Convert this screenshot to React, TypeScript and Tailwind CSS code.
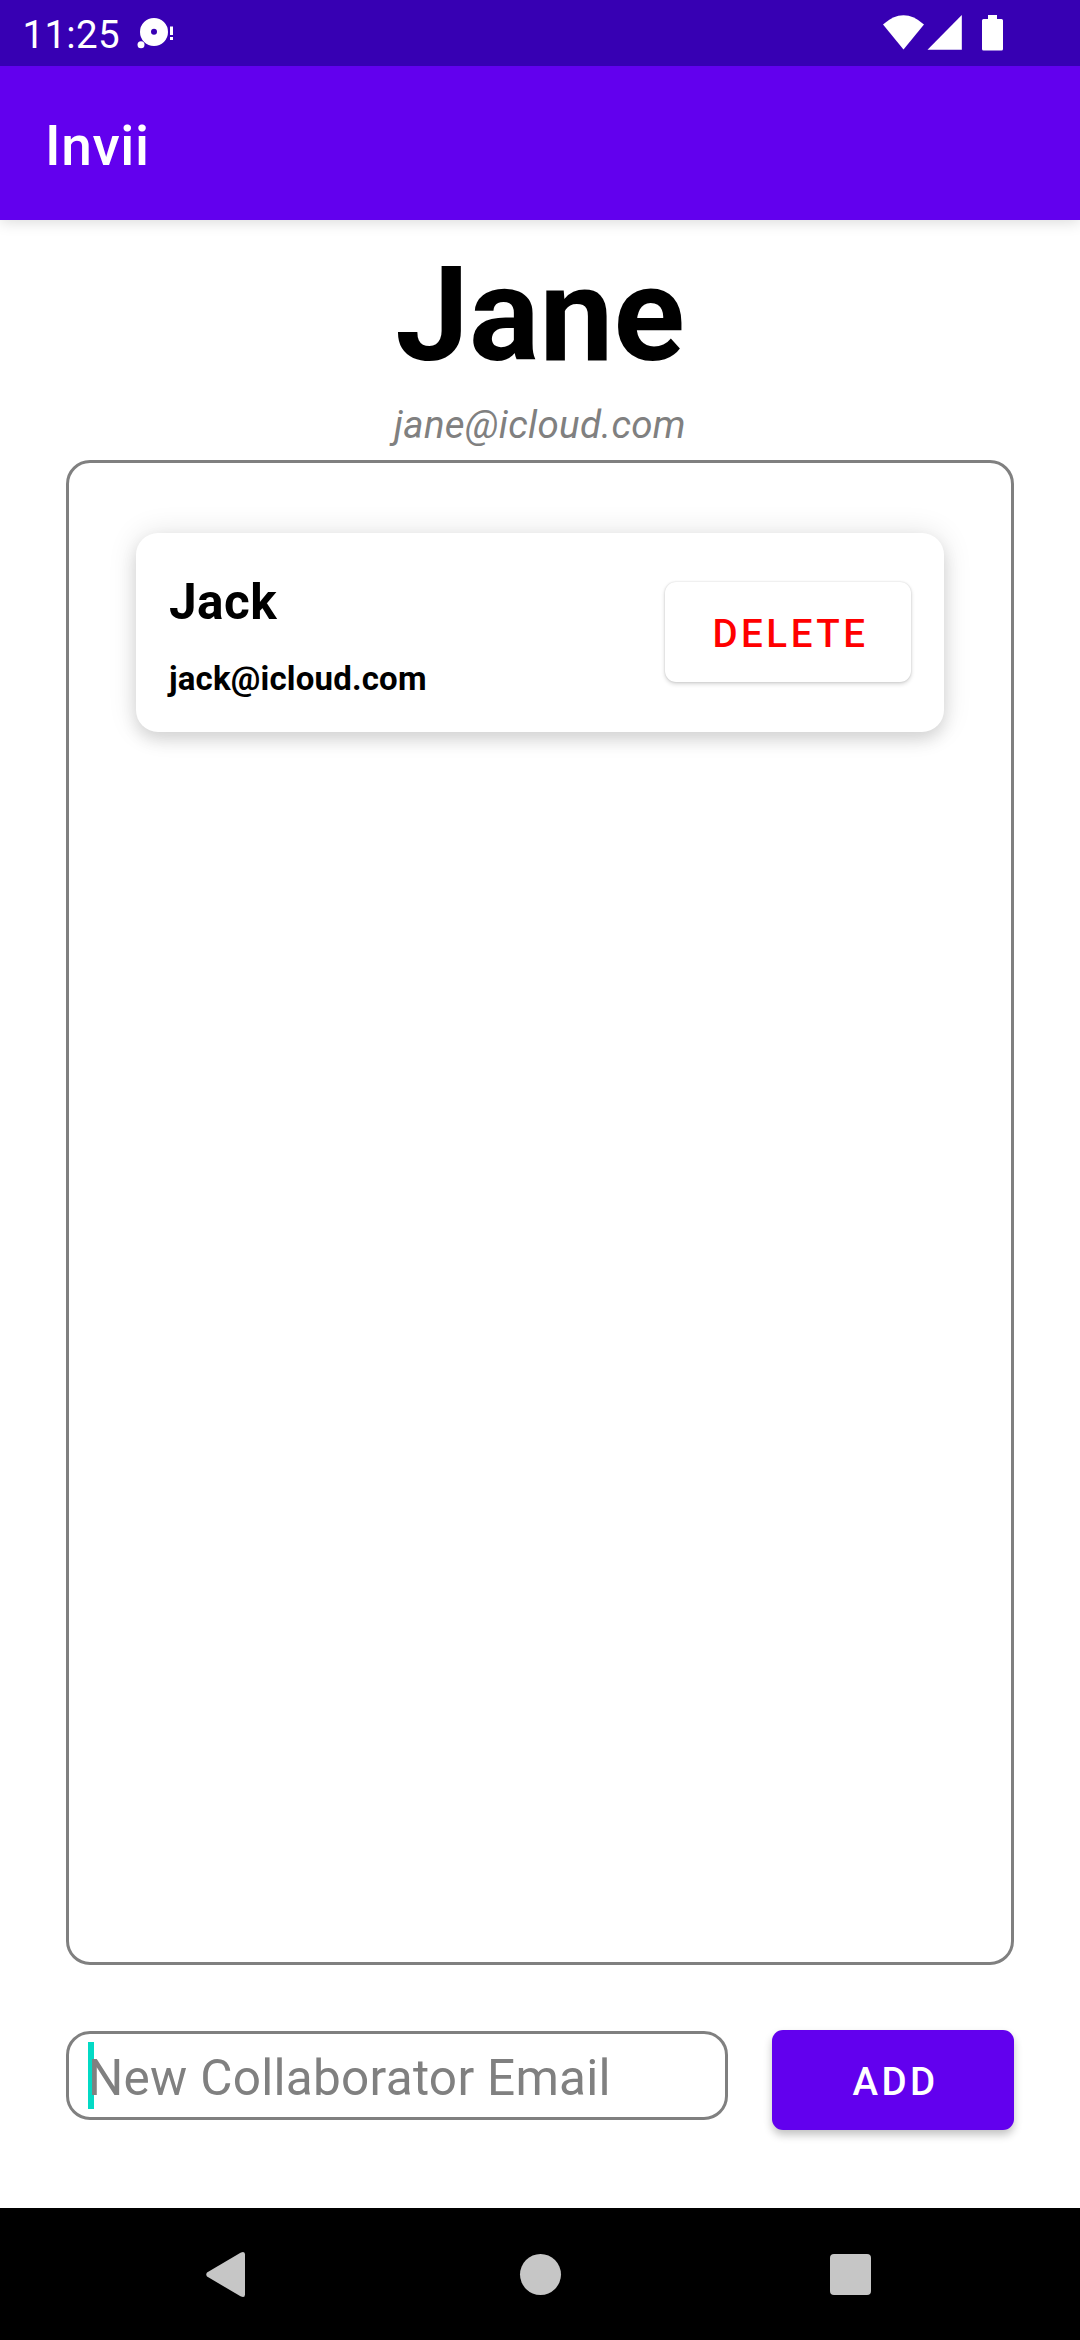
function StatusBar() {
  return (
    <div className="relative z-10 flex h-[66px] items-center bg-[#3700b3] text-white">
      <span className="ml-[22.5px] w-[97.5px] whitespace-nowrap text-[38.5px] leading-[66px] pt-[4px] tracking-[0.3px]">11:25</span>
      <svg className="ml-[16px]" width="40" height="66" viewBox="136 0 40 66" fill="currentColor">
        <path fillRule="evenodd" d="M154 18a14 14 0 1 0 0 28a14 14 0 1 0 0-28zM154 28.8a3 3 0 1 1 0 6a3 3 0 1 1 0-6z" />
        <circle cx="141" cy="44.7" r="3.5" />
        <path d="M170 26.500h3v8.500h-3zM170 37h3v3h-3z" />
      </svg>
      <svg className="ml-auto mr-[70px]" width="130" height="66" viewBox="880 0 130 66" fill="currentColor">
        <path d="M883 24.500Q903.500 6 924 24.500L903.500 49.500z" />
        <path d="M961.800 15v34.800H927.500z" />
        <path d="M988 15h9v4h4.500a1.500 1.500 0 0 1 1.500 1.500v28.500a1.500 1.500 0 0 1-1.500 1.500h-18a1.500 1.500 0 0 1-1.500-1.500v-28.500a1.500 1.500 0 0 1 1.500-1.500h4.500z" />
      </svg>
    </div>
  );
}

function CollaboratorCard({ name, email }: { name: string; email: string }) {
  return (
    <div className="flex h-[199px] items-start justify-between rounded-[22px] bg-white pl-[33px] pr-[33px] shadow-[0_0_30px_rgba(0,0,0,0.11),0_8px_16px_rgba(0,0,0,0.12)]">
      <div className="flex flex-col font-bold text-black">
        <span className="mt-[39px] text-[49.5px] leading-[60px] tracking-[0.4px]">{name}</span>
        <span className="mt-[29px] text-[33px] leading-[36px] tracking-[0.18px]">{email}</span>
      </div>
      <button className="mt-[49px] h-[100px] w-[246px] rounded-[11px] bg-white pl-[5px] pt-[4px] text-[38.5px] font-medium leading-none tracking-[3.5px] text-[#ff0000] shadow-[0_0_2px_rgba(0,0,0,0.16),0_2px_4px_rgba(0,0,0,0.17)]">
        DELETE
      </button>
    </div>
  );
}

function NavigationBar() {
  return (
    <div className="flex h-[132px] items-center bg-black text-[#c6c6c6]">
      <svg className="ml-[200px]" width="50" height="132" viewBox="200 2208 50 132" fill="currentColor">
        <path d="M207 2272.500L240.500 2252.700Q245 2250.500 245 2254.500V2294.500Q245 2298.500 240.500 2296.300L207 2276.500Q205.500 2274.500 207 2272.500z" />
      </svg>
      <div className="ml-[270px] size-[41px] rounded-full bg-[#c6c6c6]" />
      <div className="ml-[269px] size-[41px] rounded-[4px] bg-[#c6c6c6]" />
    </div>
  );
}

export default function App() {
  return (
    <div className="flex h-[2340px] w-[1080px] flex-col overflow-hidden bg-white font-[Roboto,sans-serif]">
      <StatusBar />
      <header className="relative h-[154px] bg-[#6200ee] pl-[45px] text-[55px] font-medium leading-[160px] tracking-[0.6px] text-white shadow-[0_2px_14px_rgba(0,0,0,0.15)]">
        Invii
      </header>
      <main className="flex flex-1 flex-col px-[66px]">
        <h1 className="mt-[18px] text-center text-[132px] font-bold leading-[155px] text-black">Jane</h1>
        <p className="mt-[9px] h-[58px] text-center text-[38.5px] italic leading-[45px] tracking-[0.3px] text-[#808080]">jane@icloud.com</p>
        <section className="h-[1505px] rounded-[24px] border-[3px] border-[#808080] px-[67px] pt-[70px]">
          <CollaboratorCard name="Jack" email="jack@icloud.com" />
        </section>
        <div className="mt-[65px] flex items-start gap-[44px]">
          <div className="mt-[1px] flex h-[89px] w-[662px] items-center rounded-[24px] border-[3px] border-[#808080] pl-[19px]">
            <span className="h-[67px] w-[6px] bg-[#03dac5]" />
            <span className="relative -ml-[6px] pt-[4px] whitespace-nowrap text-[49.5px] leading-[58px] tracking-[0.28px] text-[#808080]">New Collaborator Email</span>
          </div>
          <button className="h-[100px] w-[242px] rounded-[11px] bg-[#6200ee] pl-[5px] pt-[4px] text-[38.5px] font-medium leading-none tracking-[3.44px] text-white shadow-[0_5px_8px_rgba(0,0,0,0.24)]">
            ADD
          </button>
        </div>
      </main>
      <NavigationBar />
    </div>
  );
}
